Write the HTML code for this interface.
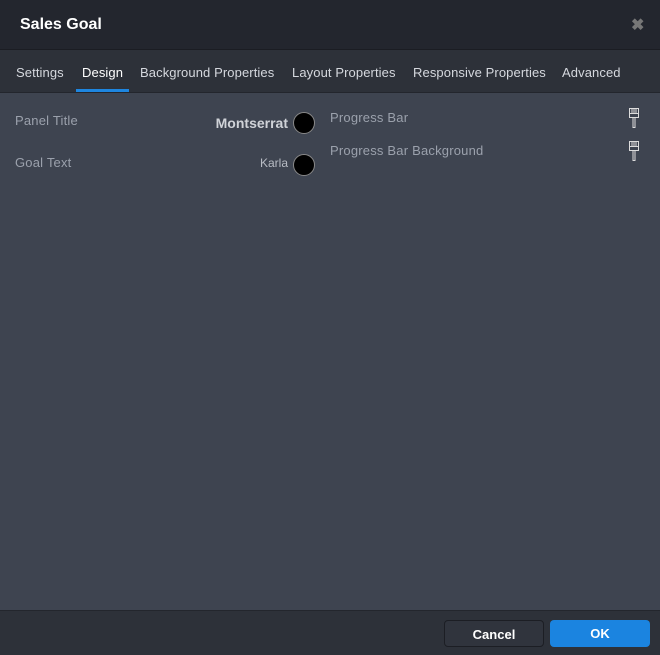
<!DOCTYPE html>
<html><head><style>
*{margin:0;padding:0;box-sizing:border-box}
body{width:660px;height:655px;background:#3e4450;font-family:"Liberation Sans",sans-serif;position:relative;overflow:hidden}
.hdr{position:absolute;left:0;top:0;width:660px;height:50px;background:#23262e;border-bottom:1px solid #1b1d23}
.hdr h1{position:absolute;left:20px;top:16px;font-size:16px;color:#fff;font-weight:bold}
.x{position:absolute;left:631px;top:15px;color:#777;font-size:16px;font-weight:bold}
.tabs{position:absolute;left:0;top:50px;width:660px;height:43px;background:#2d3139;border-bottom:1px solid #23262d}
.tab{position:absolute;top:15px;font-size:13px;color:#d5d8de;letter-spacing:0.1px}
.tab.a{color:#fff}
.ul{position:absolute;left:76px;top:39px;width:53px;height:3px;background:#1e86e0}
.lab{position:absolute;font-size:13px;color:#9ba1ac;letter-spacing:0.2px}
.font{position:absolute;font-size:13px;color:#d0d3d8;text-align:right}
.dot{position:absolute;width:22px;height:22px;border-radius:50%;background:#000;border:1px solid #888}
.ftr{position:absolute;left:0;top:610px;width:660px;height:45px;background:#2d3139;border-top:1px solid #23262d}
.btn{position:absolute;top:9px;height:27px;border-radius:4px;font-size:13px;font-weight:bold;color:#fff;text-align:center;line-height:27px}
</style></head><body>
<div class="hdr"><h1>Sales Goal</h1><div class="x">✖</div></div>
<div class="tabs">
<div class="tab" style="left:16px">Settings</div>
<div class="tab a" style="left:82px">Design</div>
<div class="tab" style="left:140px">Background Properties</div>
<div class="tab" style="left:292px">Layout Properties</div>
<div class="tab" style="left:413px">Responsive Properties</div>
<div class="tab" style="left:562px">Advanced</div>
<div class="ul"></div>
</div>
<div class="lab" style="left:15px;top:113px">Panel Title</div>
<div class="lab" style="left:15px;top:155px">Goal Text</div>
<div class="font" style="left:180px;width:108px;top:115px;font-weight:bold;font-size:14px">Montserrat</div>
<div class="font" style="left:180px;width:108px;top:156px;font-size:12px;color:#b8bcc4">Karla</div>
<div class="dot" style="left:293px;top:112px"></div>
<div class="dot" style="left:293px;top:154px"></div>
<div class="lab" style="left:330px;top:110px">Progress Bar</div>
<div class="lab" style="left:330px;top:143px">Progress Bar Background</div>
<svg style="position:absolute;left:627px;top:107px" width="14" height="22" viewBox="0 0 14 22" fill="none" stroke="#ddd" stroke-width="1"><path d="M2.5 1.5h9v9h-9z M2.5 6.5h9 M5 1.5v5 M7 1.5v5 M9 1.5v5 M6 10.5v10h2v-10"/></svg>
<svg style="position:absolute;left:627px;top:140px" width="14" height="22" viewBox="0 0 14 22" fill="none" stroke="#ddd" stroke-width="1"><path d="M2.5 1.5h9v9h-9z M2.5 6.5h9 M5 1.5v5 M7 1.5v5 M9 1.5v5 M6 10.5v10h2v-10"/></svg>
<div class="ftr">
<div class="btn" style="left:444px;width:100px;background:#30343d;border:1px solid #1c1e24">Cancel</div>
<div class="btn" style="left:550px;width:100px;background:#1b84e0">OK</div>
</div>
</body></html>
